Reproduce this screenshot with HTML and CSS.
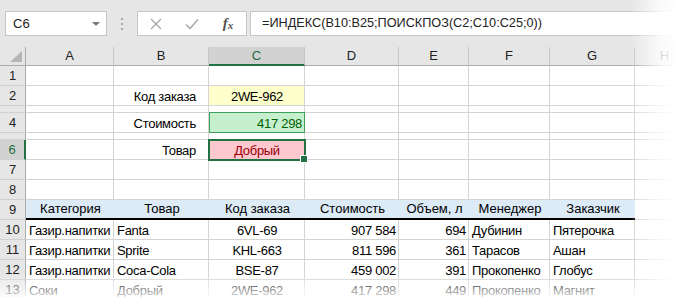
FILE: index.html
```html
<!DOCTYPE html>
<html>

<head lang="ru">
    <meta charset="UTF-8">
    <title>ИНДЕКС и ПОИСКПОЗ</title>
    <link rel="stylesheet" href="styles.css">
</head>

<body>
    <div class="excel">
        <!-- строка формул -->
        <div class="toolbar">
            <div class="namebox"><span>C6</span><span class="caret"></span></div>
            <div class="grip">
                <svg width="4" height="14" viewBox="0 0 4 14">
                    <rect x="1" y="1" width="2" height="2" fill="#a9a9a9"/>
                    <rect x="1" y="6" width="2" height="2" fill="#a9a9a9"/>
                    <rect x="1" y="11" width="2" height="2" fill="#a9a9a9"/>
                </svg>
            </div>
            <div class="fx-buttons">
                <span class="btn">
                    <svg width="12" height="12" viewBox="0 0 12 12">
                        <path d="M1 1 L11 11 M11 1 L1 11" stroke="#a6a6a6" stroke-width="1.3" fill="none"/>
                    </svg>
                </span>
                <span class="btn">
                    <svg width="14" height="12" viewBox="0 0 14 12">
                        <path d="M1 6.5 L5 10.5 L13 1.5" stroke="#a6a6a6" stroke-width="1.4" fill="none"/>
                    </svg>
                </span>
                <span class="btn fx">f<small>x</small></span>
            </div>
            <div class="formula">=ИНДЕКС(B10:B25;ПОИСКПОЗ(C2;C10:C25;0))</div>
        </div>

        <!-- лист -->
        <div class="sheet">
            <div class="corner"><span class="tri"></span></div>
            <div class="hd">A</div>
            <div class="hd">B</div>
            <div class="hd sel">C</div>
            <div class="hd">D</div>
            <div class="hd">E</div>
            <div class="hd">F</div>
            <div class="hd">G</div>
            <div class="hd">H</div>

            <div class="rh">1</div>
            <div class="c"></div><div class="c"></div><div class="c"></div><div class="c"></div>
            <div class="c"></div><div class="c"></div><div class="c"></div><div class="c"></div>

            <div class="rh">2</div>
            <div class="c"></div>
            <div class="c r label">Код заказа</div>
            <div class="c m code">2WE-962</div>
            <div class="c"></div><div class="c"></div><div class="c"></div><div class="c"></div><div class="c"></div>

            <!-- скрытая строка 3 -->
            <div class="rh thin"></div>
            <div class="c"></div><div class="c"></div><div class="c"></div><div class="c"></div>
            <div class="c"></div><div class="c"></div><div class="c"></div><div class="c"></div>

            <div class="rh">4</div>
            <div class="c"></div>
            <div class="c r label">Стоимость</div>
            <div class="c r good">417 298</div>
            <div class="c"></div><div class="c"></div><div class="c"></div><div class="c"></div><div class="c"></div>

            <!-- скрытая строка 5 -->
            <div class="rh thin"></div>
            <div class="c"></div><div class="c"></div><div class="c"></div><div class="c"></div>
            <div class="c"></div><div class="c"></div><div class="c"></div><div class="c"></div>

            <div class="rh sel">6</div>
            <div class="c"></div>
            <div class="c r label">Товар</div>
            <div class="c m bad active">Добрый</div>
            <div class="c"></div><div class="c"></div><div class="c"></div><div class="c"></div><div class="c"></div>

            <div class="rh">7</div>
            <div class="c"></div><div class="c"></div><div class="c"></div><div class="c"></div>
            <div class="c"></div><div class="c"></div><div class="c"></div><div class="c"></div>

            <div class="rh">8</div>
            <div class="c"></div><div class="c"></div><div class="c"></div><div class="c"></div>
            <div class="c"></div><div class="c"></div><div class="c"></div><div class="c"></div>

            <div class="rh">9</div>
            <div class="c th">Категория</div>
            <div class="c th">Товар</div>
            <div class="c th">Код заказа</div>
            <div class="c th">Стоимость</div>
            <div class="c th">Объем, л</div>
            <div class="c th">Менеджер</div>
            <div class="c th">Заказчик</div>
            <div class="c"></div>

            <div class="rh">10</div>
            <div class="c">Газир.напитки</div>
            <div class="c">Fanta</div>
            <div class="c m">6VL-69</div>
            <div class="c r">907 584</div>
            <div class="c r">694</div>
            <div class="c">Дубинин</div>
            <div class="c">Пятерочка</div>
            <div class="c"></div>

            <div class="rh">11</div>
            <div class="c">Газир.напитки</div>
            <div class="c">Sprite</div>
            <div class="c m">KHL-663</div>
            <div class="c r">811 596</div>
            <div class="c r">361</div>
            <div class="c">Тарасов</div>
            <div class="c">Ашан</div>
            <div class="c"></div>

            <div class="rh">12</div>
            <div class="c">Газир.напитки</div>
            <div class="c">Coca-Cola</div>
            <div class="c m">BSE-87</div>
            <div class="c r">459 002</div>
            <div class="c r">391</div>
            <div class="c">Прокопенко</div>
            <div class="c">Глобус</div>
            <div class="c"></div>

            <div class="rh">13</div>
            <div class="c">Соки</div>
            <div class="c">Добрый</div>
            <div class="c m">2WE-962</div>
            <div class="c r">417 298</div>
            <div class="c r">449</div>
            <div class="c">Прокопенко</div>
            <div class="c">Магнит</div>
            <div class="c"></div>
        </div>

        <!-- рваный край скриншота -->
        <div class="fade"></div>
    </div>
</body>

</html>
```

FILE: styles.css
```css
* {
    margin: 0;
    padding: 0;
    box-sizing: border-box;
}

body {
    background-color: #fff;
    font-family: "Liberation Sans", Arial, sans-serif;
}

.excel {
    width: 679px;
    height: 297px;
    overflow: hidden;
    position: relative;
    background: #fff;
}

/* строка формул */
.toolbar {
    display: flex;
    align-items: flex-start;
    height: 47px;
    padding: 11px 0 0 5px;
    background: #e6e6e6;
}

.namebox {
    width: 102px;
    height: 25px;
    background: #fff;
    border: 1px solid #c6c6c6;
    display: flex;
    align-items: center;
    justify-content: space-between;
    padding: 0 6px 0 7px;
    font-size: 13px;
    color: #222;
}

.caret {
    border-left: 4px solid transparent;
    border-right: 4px solid transparent;
    border-top: 4px solid #7a7a7a;
}

.grip {
    width: 30px;
    height: 25px;
    display: flex;
    align-items: center;
    justify-content: center;
}

.fx-buttons {
    width: 110px;
    height: 25px;
    background: #fff;
    border: 1px solid #c6c6c6;
    display: flex;
}

.btn {
    flex: 1;
    display: flex;
    align-items: center;
    justify-content: center;
}

.fx {
    font-family: "Liberation Serif", "Times New Roman", serif;
    font-style: italic;
    font-weight: bold;
    font-size: 15px;
    color: #555;
}

.fx small {
    font-size: 11px;
    margin-top: 3px;
}

.formula {
    flex: 1;
    height: 25px;
    margin-left: 3px;
    background: #fff;
    border: 1px solid #c6c6c6;
    border-right: none;
    padding-left: 11px;
    font-size: 12.7px;
    line-height: 23px;
    color: #222;
    white-space: nowrap;
}

/* лист */
.sheet {
    display: grid;
    grid-template-columns: 26px 88px 95px 96px 94px 70px 81px 85px 60px;
    grid-template-rows: 19px 20px 20px 7px 20px 7px 20px 20px 20px 20px 20px 20px 20px 20px;
    font-size: 13px;
}

.corner {
    background: #e6e6e6;
    border-right: 1px solid #ababab;
    border-bottom: 1px solid #ababab;
    display: flex;
    justify-content: flex-end;
    align-items: flex-end;
    padding: 0 3px 3px 0;
}

.tri {
    width: 12px;
    height: 11px;
    background: #b5b5b5;
    clip-path: polygon(100% 0, 100% 100%, 0 100%);
}

.hd {
    background: #e6e6e6;
    border-right: 1px solid #c8c8c8;
    border-bottom: 1px solid #ababab;
    text-align: center;
    line-height: 18px;
    color: #222;
}

.hd.sel {
    background: #d2d2d2;
    border-bottom: 2px solid #217346;
    color: #1e6b40;
}

.rh {
    background: #e6e6e6;
    border-right: 1px solid #ababab;
    border-bottom: 1px solid #d0d0d0;
    display: flex;
    justify-content: center;
    align-items: flex-end;
    line-height: 18px;
    overflow: hidden;
    color: #222;
}

.rh.sel {
    background: #d2d2d2;
    border-right: 2px solid #217346;
    color: #1e6b40;
}

.c {
    border-right: 1px solid #d4d4d4;
    border-bottom: 1px solid #d4d4d4;
    display: flex;
    align-items: flex-end;
    padding: 0 2px 0 3px;
    line-height: 17px;
    letter-spacing: -0.3px;
    white-space: nowrap;
    overflow: hidden;
    color: #000;
}

.c.r {
    justify-content: flex-end;
}

.c.m {
    justify-content: center;
}

.c.label {
    padding-right: 12px;
}

.c.code {
    background: #ffffcc;
}

.c.good {
    background: #c6efce;
    border: 1px solid #3f9f5d;
    color: #006100;
    margin-top: -1px;
}

.c.bad {
    background: #ffc7ce;
    color: #9c0006;
    overflow: visible;
    position: relative;
}

.c.active::after {
    content: "";
    position: absolute;
    left: -1px;
    top: -1px;
    right: -2px;
    bottom: -2px;
    border: 2px solid #217346;
}

.c.active::before {
    content: "";
    position: absolute;
    right: -4px;
    bottom: -4px;
    width: 6px;
    height: 6px;
    background: #217346;
    border: 1px solid #fff;
    z-index: 1;
}

.c.th {
    background: #ddebf7;
    border-right: none;
    border-bottom: 2px solid #000;
    justify-content: center;
    line-height: 18px;
    letter-spacing: 0;
}

/* рваный край скриншота */
.fade {
    position: absolute;
    left: 0;
    top: 0;
    right: 0;
    bottom: 0;
    pointer-events: none;
    background:
        linear-gradient(to right, rgba(255, 255, 255, 0) 630px, rgba(255, 255, 255, 0.8) 660px, #fff 679px),
        linear-gradient(to bottom, rgba(255, 255, 255, 0) 274px, rgba(255, 255, 255, 0.85) 297px);
}
```
